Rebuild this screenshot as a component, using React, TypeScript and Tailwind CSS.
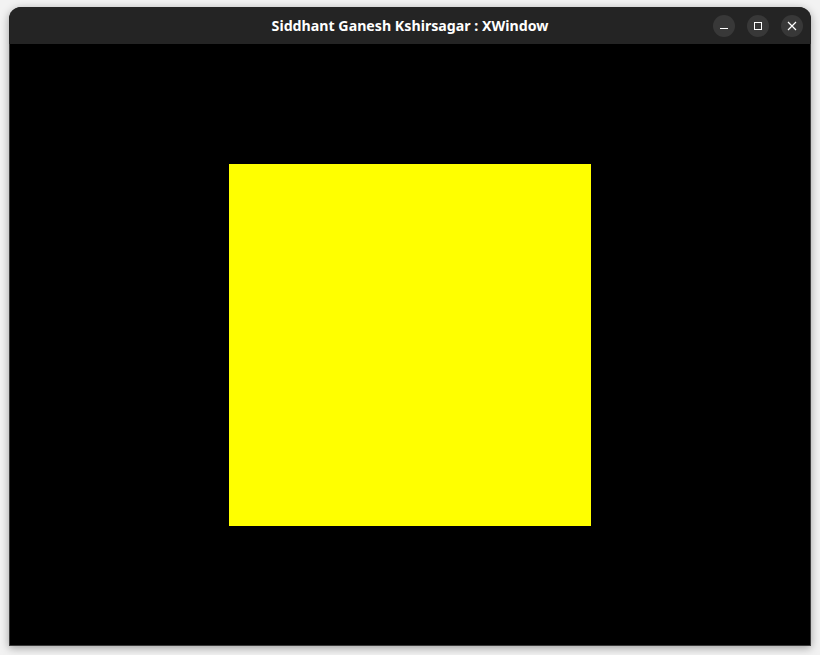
export default function App() {
  return (
    <div className="w-[820px] h-[655px] bg-[#f2f2f2] pt-[7px] pl-[9px]">
      <div className="w-[802px] h-[639px] rounded-t-[12px] overflow-hidden flex flex-col shadow-[0_2px_8px_rgba(0,0,0,0.35)] bg-[#3a3a3a]">
        <div className="h-[37px] bg-[#242424] flex items-center justify-center relative shrink-0">
          <span className="text-white font-bold text-[14.2px] mt-[1px]" style={{ fontFamily: '"Noto Sans", "Open Sans", sans-serif' }}>
            Siddhant Ganesh Kshirsagar : XWindow
          </span>
          <div className="absolute right-[8px] top-[8px] flex gap-[12px]">
            <div className="w-[22px] h-[22px] rounded-full bg-[#383838] flex items-center justify-center">
              <div className="w-[8px] h-[1px] bg-white mt-[5px]" />
            </div>
            <div className="w-[22px] h-[22px] rounded-full bg-[#383838] flex items-center justify-center">
              <div className="w-[8px] h-[8px] border border-white" />
            </div>
            <div className="w-[22px] h-[22px] rounded-full bg-[#383838] flex items-center justify-center">
              <svg width="10" height="10" viewBox="0 0 10 10">
                <path d="M1 1L9 9M9 1L1 9" stroke="white" strokeWidth="1.2" />
              </svg>
            </div>
          </div>
        </div>
        <div className="flex-1 bg-black mx-[1px] mb-[1px] flex justify-center pt-[120px]">
          <div className="w-[362px] h-[362px] bg-[#ffff00]" />
        </div>
      </div>
    </div>
  );
}
